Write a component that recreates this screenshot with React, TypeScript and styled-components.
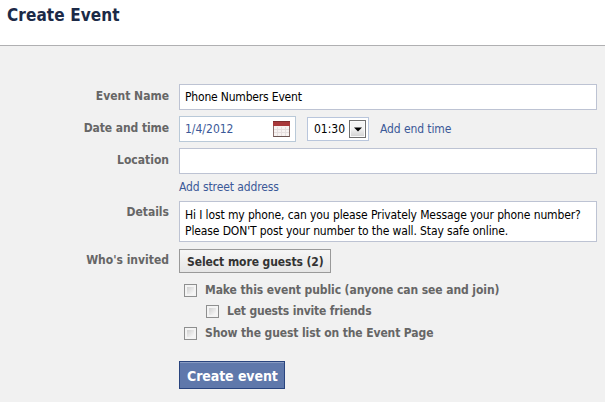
import React from "react";
import styled, { createGlobalStyle } from "styled-components";

const Global = createGlobalStyle`
  *, *::before, *::after { box-sizing: border-box; }
  html, body { margin: 0; background: #f1f1f1; }
  body {
    font-family: "DejaVu Sans Condensed", "DejaVu Sans", Tahoma, sans-serif;
    font-stretch: condensed;
    font-size: 12px;
    line-height: 16px;
    overflow: hidden;
  }
  button, input { font: inherit; }
`;

const Page = styled.main`
  width: 605px;
  height: 402px;
  background: #f1f1f1;
  overflow: hidden;
`;

const Header = styled.header`
  height: 46px;
  padding: 5px 0 0 7px;
  background: #fff;
  border-bottom: 1px solid #b0b0b2;
`;

const Title = styled.h1`
  margin: 0;
  font-size: 17px;
  line-height: 20px;
  font-weight: bold;
  color: #1c2a47;
`;

const Text = styled.span<{ $track?: number }>`
  white-space: nowrap;
  letter-spacing: ${(p) => p.$track ?? 0}px;
`;

const Form = styled.div`
  padding-top: 38px;
`;

const Row = styled.div<{ $gap: number }>`
  display: grid;
  grid-template-columns: 169px 418px;
  column-gap: 10px;
  margin-bottom: ${(p) => p.$gap}px;
`;

const Label = styled.div<{ $top?: number }>`
  padding-top: ${(p) => p.$top ?? 4}px;
  text-align: right;
  font-weight: bold;
  color: #666;
`;

const Field = styled.div`
  height: 26px;
  padding: 4px 5px;
  border: 1px solid #bdc3d3;
  background: #fff;
  color: #000;
`;

const DateField = styled(Field)`
  display: flex;
  justify-content: space-between;
  width: 117px;
  padding-right: 4px;
  border-color: #b9c9d8;
  color: #3b5998;
`;

const Line = styled.div`
  display: flex;
  align-items: center;
`;

const TimeSelect = styled.div`
  display: flex;
  align-items: center;
  justify-content: space-between;
  width: 62px;
  height: 24px;
  margin: 0 11px;
  padding: 0 2px 0 6px;
  border: 1px solid #b9c6dc;
  background: #fff;
  color: #000;
`;

const Arrow = styled.span`
  display: grid;
  place-items: center;
  width: 17px;
  height: 18px;
  border: 1px solid #707070;
  background: linear-gradient(#f4f4f4 45%, #d0d0d0);
  box-shadow: inset 0 0 0 1px #fafafa;
`;

const Link = styled.a`
  color: #3b5998;
  text-decoration: none;
`;

const StreetLine = styled.div`
  height: 27px;
  padding-top: 5px;
`;

const Details = styled.div`
  height: 41px;
  padding: 5px;
  border: 1px solid #bdc3d3;
  background: #fff;
  color: #000;
  p { margin: 0; height: 16px; }
`;

const GuestButton = styled.button`
  display: flex;
  align-items: center;
  width: 152px;
  height: 24px;
  padding: 1px 0 0 7px;
  border: 1px solid #999;
  background: linear-gradient(#f6f6f6, #e6e6e6);
  color: #333;
  font-size: 12px;
  font-weight: bold;
`;

const Options = styled.div`
  padding-left: 184px;
  margin-bottom: 20px;
`;

const Option = styled.label<{ $indent?: boolean; $height: number }>`
  display: flex;
  align-items: flex-start;
  gap: 8px;
  height: ${(p) => p.$height}px;
  padding-left: ${(p) => (p.$indent ? 22 : 0)}px;
  font-weight: bold;
  color: #666;
  span { margin-top: -2px; }
`;

const Check = styled.i`
  flex: none;
  width: 13px;
  height: 13px;
  border: 1px solid #8e8f8f;
  background: linear-gradient(135deg, #c4c4c4, #f6f6f6 75%);
  box-shadow: inset 0 0 0 2px #f4f4f4;
`;

const Submit = styled.button`
  display: flex;
  align-items: center;
  width: 106px;
  height: 28px;
  margin-left: 179px;
  padding: 2px 0 0 7px;
  border: 1px solid #29447e;
  background: #5f78ab;
  box-shadow: inset 0 1px 0 #8a9cc2;
  color: #fff;
  font-size: 14px;
  font-weight: bold;
`;

const CalendarIcon = () => (
  <svg width="18" height="17" viewBox="0 0 18 17" aria-hidden="true">
    <rect x="0.5" y="0.5" width="16" height="15" fill="#f7f3f2" stroke="#8a6f6c" />
    <path d="M1 8.5H16M1 11.5H16M4.5 6V15M8.5 6V15M12.5 6V15" stroke="#e6dfdf" fill="none" />
    <rect x="0" y="0" width="17" height="5" fill="#a8383a" />
    <path d="M0 0.5H17" stroke="#7d2c2e" />
    <path d="M0.5 15.5H16.5" stroke="#6b5552" />
  </svg>
);

export default function App() {
  return (
    <>
      <Global />
      <Page>
        <Header>
          <Title><Text $track={0.1}>Create Event</Text></Title>
        </Header>
        <Form>
          <Row $gap={6}>
            <Label><Text>Event Name</Text></Label>
            <Field><Text $track={-0.18}>Phone Numbers Event</Text></Field>
          </Row>
          <Row $gap={6}>
            <Label><Text $track={-0.08}>Date and time</Text></Label>
            <Line>
              <DateField><Text>1/4/2012</Text><CalendarIcon /></DateField>
              <TimeSelect>
                <Text>01:30</Text>
                <Arrow>
                  <svg width="8" height="5" viewBox="0 0 8 5" aria-hidden="true"><path d="M0 0.5H8L4 4.5Z" fill="#000" /></svg>
                </Arrow>
              </TimeSelect>
              <Link><Text $track={-0.1}>Add end time</Text></Link>
            </Line>
          </Row>
          <Row $gap={0}>
            <Label><Text>Location</Text></Label>
            <div>
              <Field />
              <StreetLine><Link><Text $track={-0.1}>Add street address</Text></Link></StreetLine>
            </div>
          </Row>
          <Row $gap={7}>
            <Label $top={3}><Text>Details</Text></Label>
            <Details>
              <p><Text $track={-0.115}>Hi I lost my phone, can you please Privately Message your phone number?</Text></p>
              <p><Text $track={-0.115}>Please DON'T post your number to the wall. Stay safe online.</Text></p>
            </Details>
          </Row>
          <Row $gap={11}>
            <Label $top={3}><Text>Who's invited</Text></Label>
            <GuestButton><Text $track={-0.08}>Select more guests (2)</Text></GuestButton>
          </Row>
          <Options>
            <Option $height={21}><Check /><Text $track={-0.09}>Make this event public (anyone can see and join)</Text></Option>
            <Option $height={22} $indent><Check /><Text $track={-0.18}>Let guests invite friends</Text></Option>
            <Option $height={14}><Check /><Text $track={-0.11}>Show the guest list on the Event Page</Text></Option>
          </Options>
          <Submit><Text $track={-0.08}>Create event</Text></Submit>
        </Form>
      </Page>
    </>
  );
}
